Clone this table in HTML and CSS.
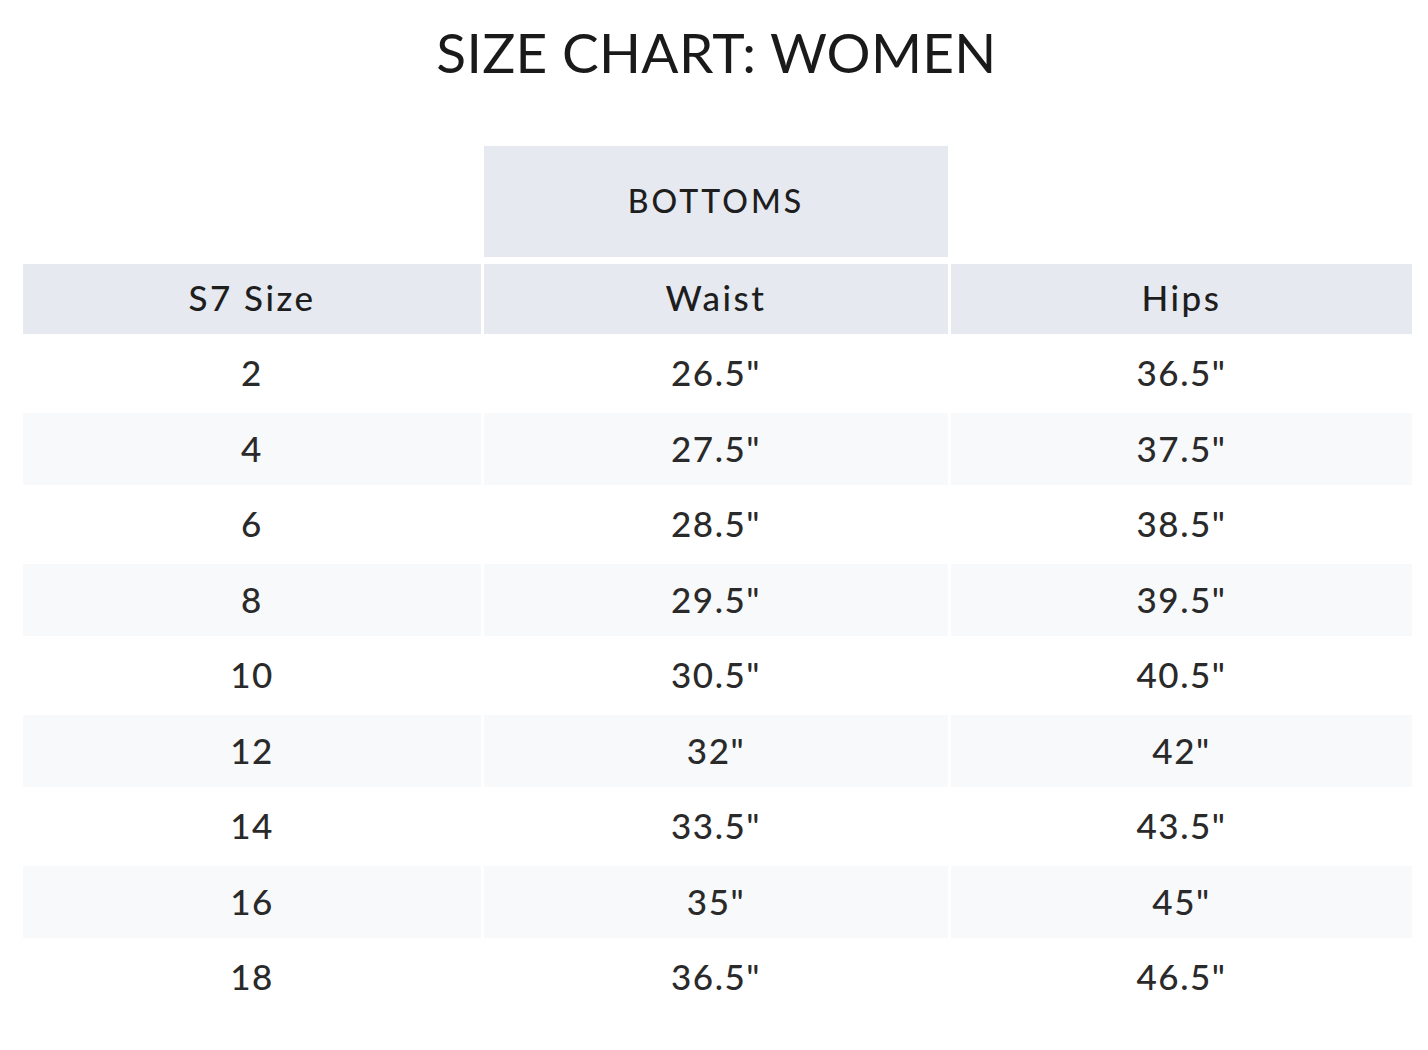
FILE: index.html
```html
<!DOCTYPE html>
<html>
<head>
<meta charset="utf-8">
<link rel="stylesheet" href="styles.css">
</head>
<body>
<div class="page">
  <h1 class="title">SIZE CHART: WOMEN</h1>
  <div class="chart">
    <div class="group-row">
      <div class="blank"></div>
      <div class="group-cell">BOTTOMS</div>
      <div class="blank"></div>
    </div>
    <div class="row head">
      <div class="cell">S7 Size</div>
      <div class="cell">Waist</div>
      <div class="cell">Hips</div>
    </div>
    <div class="row"><div class="cell">2</div><div class="cell">26.5"</div><div class="cell">36.5"</div></div>
    <div class="row alt"><div class="cell">4</div><div class="cell">27.5"</div><div class="cell">37.5"</div></div>
    <div class="row"><div class="cell">6</div><div class="cell">28.5"</div><div class="cell">38.5"</div></div>
    <div class="row alt"><div class="cell">8</div><div class="cell">29.5"</div><div class="cell">39.5"</div></div>
    <div class="row"><div class="cell">10</div><div class="cell">30.5"</div><div class="cell">40.5"</div></div>
    <div class="row alt"><div class="cell">12</div><div class="cell">32"</div><div class="cell">42"</div></div>
    <div class="row"><div class="cell">14</div><div class="cell">33.5"</div><div class="cell">43.5"</div></div>
    <div class="row alt"><div class="cell">16</div><div class="cell">35"</div><div class="cell">45"</div></div>
    <div class="row"><div class="cell">18</div><div class="cell">36.5"</div><div class="cell">46.5"</div></div>
  </div>
</div>
</body>
</html>
```
FILE: styles.css
```css
html, body {
  margin: 0;
  padding: 0;
  background: #ffffff;
}
.page {
  width: 1428px;
  padding: 0 18px 0 23px;
  box-sizing: border-box;
  font-family: "Lato", "Noto Sans", sans-serif;
  color: #222222;
}
.title {
  margin: 0;
  padding-top: 22px;
  height: 146px;
  box-sizing: border-box;
  text-align: center;
  font-size: 55px;
  line-height: 60px;
  font-weight: 400;
  letter-spacing: 0.3px;
  color: #1a1a1a;
}
.chart {
  display: flex;
  flex-direction: column;
  gap: 3px;
}
.group-row {
  display: grid;
  grid-template-columns: 458px 464px 461px;
  column-gap: 3px;
  margin-bottom: 4px;
}
.group-cell {
  height: 111px;
  background: #e6eaf0;
  display: flex;
  align-items: center;
  justify-content: center;
  padding-bottom: 3px;
  box-sizing: border-box;
  font-size: 32px;
  font-weight: 500;
  letter-spacing: 3px;
  color: #1e1e1e;
}
.row {
  display: grid;
  grid-template-columns: 458px 464px 461px;
  column-gap: 3px;
  height: 72.5px;
}
.row .cell {
  display: flex;
  align-items: center;
  justify-content: center;
  padding-bottom: 2px;
  box-sizing: border-box;
  font-size: 35px;
  font-weight: 500;
  letter-spacing: 1.5px;
  color: #2a2a2a;
}
.row.head {
  height: 70px;
}
.row.head .cell {
  background: #e6eaf0;
  padding-bottom: 4px;
  font-size: 35px;
  letter-spacing: 2.5px;
  color: #1e1e1e;
}
.row.alt .cell {
  background: #f8f9fb;
}
```
